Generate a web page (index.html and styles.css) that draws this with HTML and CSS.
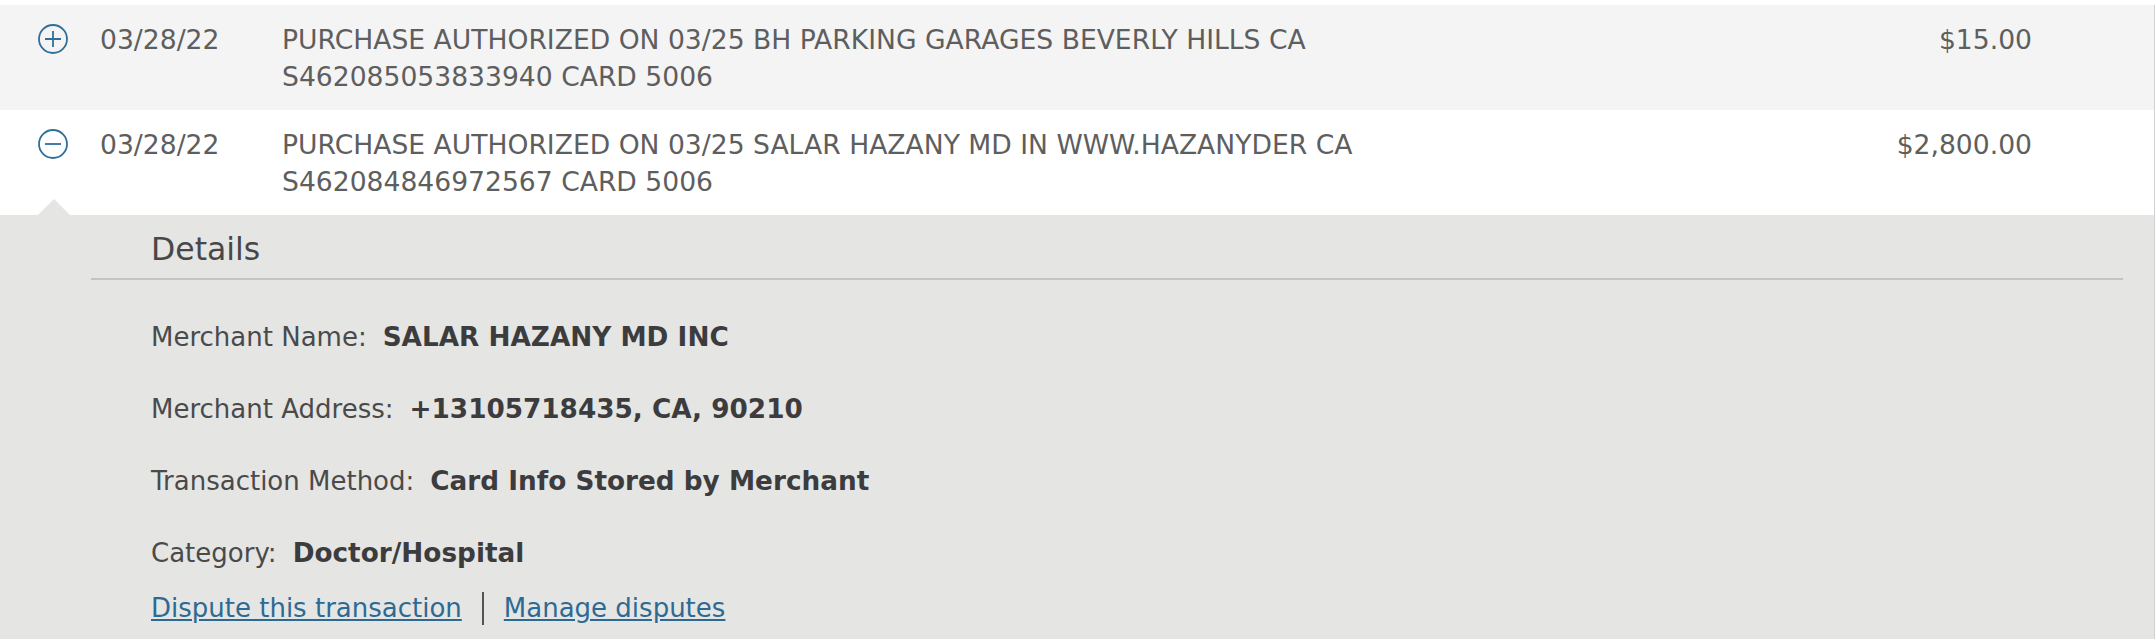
FILE: index.html
```html
<!DOCTYPE html>
<html lang="en">
<head>
    <meta charset="UTF-8">
    <meta name="viewport" content="width=device-width, initial-scale=1.0">
    <title>Account Activity</title>
    <link rel="stylesheet" href="styles.css">
</head>
<body>
    <div class="txn-list">
        <div class="txn-row shaded">
            <div class="txn-toggle">
                <svg width="30" height="30" viewBox="0 0 30 30">
                    <circle cx="15" cy="15" r="14" fill="none" stroke="#2f6f98" stroke-width="1.8"/>
                    <path d="M7 15H23M15 7V23" stroke="#2f6f98" stroke-width="1.8"/>
                </svg>
            </div>
            <div class="txn-date">03/28/22</div>
            <div class="txn-desc">PURCHASE AUTHORIZED ON 03/25 BH PARKING GARAGES BEVERLY HILLS CA<br>S462085053833940 CARD 5006</div>
            <div class="txn-amount">$15.00</div>
        </div>

        <div class="txn-row">
            <div class="txn-toggle">
                <svg width="30" height="30" viewBox="0 0 30 30">
                    <circle cx="15" cy="15" r="14" fill="none" stroke="#2f6f98" stroke-width="1.8"/>
                    <path d="M7 15H23" stroke="#2f6f98" stroke-width="1.8"/>
                </svg>
            </div>
            <div class="txn-date">03/28/22</div>
            <div class="txn-desc">PURCHASE AUTHORIZED ON 03/25 SALAR HAZANY MD IN WWW.HAZANYDER CA<br>S462084846972567 CARD 5006</div>
            <div class="txn-amount">$2,800.00</div>
        </div>

        <div class="txn-details">
            <h2 class="details-title">Details</h2>
            <div class="details-body">
                <div class="detail-line">
                    <span class="detail-label">Merchant Name:</span>
                    <strong>SALAR HAZANY MD INC</strong>
                </div>
                <div class="detail-line">
                    <span class="detail-label">Merchant Address:</span>
                    <strong>+13105718435, CA, 90210</strong>
                </div>
                <div class="detail-line">
                    <span class="detail-label">Transaction Method:</span>
                    <strong>Card Info Stored by Merchant</strong>
                </div>
                <div class="detail-line">
                    <span class="detail-label">Category:</span>
                    <strong>Doctor/Hospital</strong>
                </div>
                <div class="detail-links">
                    <a href="#">Dispute this transaction</a>
                    <span class="link-sep"></span>
                    <a href="#">Manage disputes</a>
                </div>
            </div>
        </div>
    </div>
</body>
</html>
```

FILE: styles.css
```css
body {
    font-family: Verdana, "DejaVu Sans", sans-serif;
    margin: 0;
    padding: 0;
    background-color: white;
}

.txn-list {
    margin-top: 5px;
    margin-right: 1px;
    border-right: 1px solid #d2d2d2;
}

.txn-row {
    display: grid;
    grid-template-columns: 100px 182px 1fr auto;
    padding: 16px 122px 15px 0;
    font-size: 26.6px;
    line-height: 37px;
    color: #5e5e5e;
    background-color: white;
}

.txn-row.shaded {
    background-color: #f4f4f4;
}

.txn-toggle {
    padding-left: 38px;
}

.txn-toggle svg {
    display: block;
    margin-top: 3px;
}

.txn-amount {
    text-align: right;
}

.txn-details {
    position: relative;
    background-color: #e5e5e4;
    height: 424px;
    box-sizing: border-box;
}

/* little arrow pointing up at the open row */
.txn-details::before {
    content: "";
    position: absolute;
    top: -16px;
    left: 38px;
    border-left: 16px solid transparent;
    border-right: 16px solid transparent;
    border-bottom: 16px solid #e5e5e4;
}

.details-title {
    margin: 0 31px 0 91px;
    padding: 14px 0 9px 60px;
    font-size: 31.5px;
    font-weight: normal;
    line-height: 40px;
    color: #474747;
    border-bottom: 2px solid #c3c3c3;
}

.details-body {
    padding: 39px 0 0 151px;
    font-size: 26px;
    line-height: 36px;
    color: #4a4a4a;
}

.detail-line {
    display: flex;
    align-items: baseline;
    gap: 16px;
    margin-bottom: 36px;
}

.detail-line strong {
    font-size: 26.3px;
    color: #3c3c3e;
}

.detail-line:nth-child(4) {
    margin-bottom: 19px;
}

.detail-links {
    display: flex;
    align-items: center;
    gap: 20px;
}

.detail-links a {
    color: #2d6a93;
    text-decoration: underline;
}

.link-sep {
    width: 2px;
    height: 33px;
    background-color: #555;
}
```
